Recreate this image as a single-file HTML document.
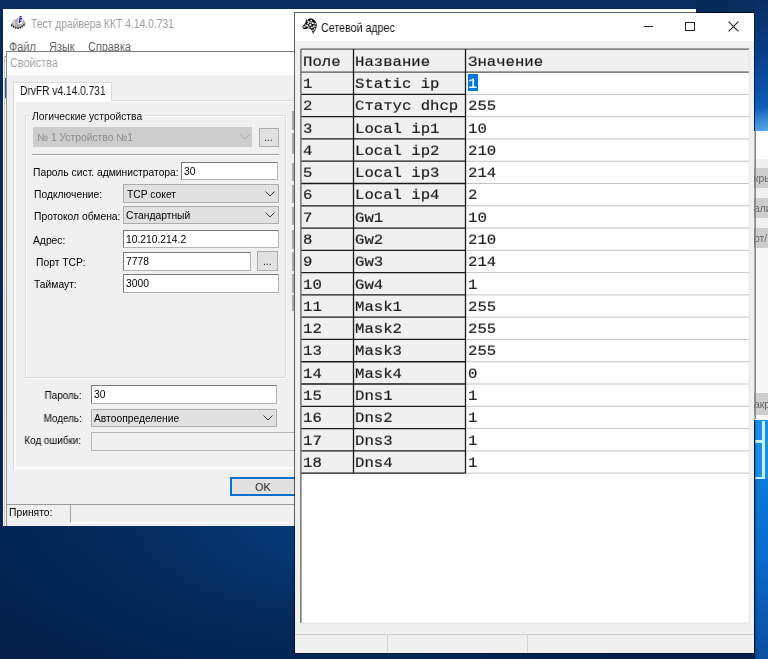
<!DOCTYPE html>
<html><head><meta charset="utf-8">
<style>
*{margin:0;padding:0;box-sizing:border-box}
html,body{width:768px;height:659px;overflow:hidden}
body{position:relative;font-family:"Liberation Sans",sans-serif;
 background:radial-gradient(ellipse 380px 200px at 330px 520px,#063f80 0%,rgba(5,52,108,.6) 45%,rgba(4,36,80,0) 100%),linear-gradient(180deg,#072b5e 0%,#052858 55%,#031f48 100%)}
.a{position:absolute}
.t{position:absolute;white-space:nowrap;line-height:1;transform-origin:left top;-webkit-font-smoothing:antialiased;will-change:transform}
</style></head><body>
<div class="a" style="left:696px;top:0px;width:72px;height:12.3px;background:linear-gradient(90deg,#072856 0%,#0a2e62 100%)"></div>
<div class="a" style="left:754.6px;top:0px;width:13.4px;height:131px;background:linear-gradient(180deg,#0a2e62 0%,#0a3d86 40%,#0c56b0 75%,#1a70c8 100%)"></div>
<div class="a" style="left:754.6px;top:95px;width:13.4px;height:36px;background:linear-gradient(165deg,rgba(90,170,235,0) 35%,rgba(110,185,240,.75) 100%)"></div>
<div class="a" style="left:754.6px;top:419px;width:13.4px;height:60px;background:#1b8fe8"></div>
<div class="a" style="left:754.6px;top:479px;width:13.4px;height:180px;background:linear-gradient(180deg,#0b7ad8 0%,#0a6cd0 40%,#0a4e9e 100%)"></div>
<div class="a" style="left:761.8px;top:421px;width:2.8px;height:58px;background:#c4f3ff"></div>
<div class="a" style="left:755px;top:440px;width:8px;height:2.6px;background:#c4f3ff"></div>
<div class="a" style="left:755px;top:476.6px;width:8px;height:2.6px;background:#c4f3ff"></div>
<div class="a" style="left:754.6px;top:420px;width:2.4px;height:239px;background:linear-gradient(90deg,rgba(0,20,60,.35),rgba(0,20,60,0))"></div>
<div class="a" style="left:754px;top:131px;width:14px;height:288px;background:#fff"></div>
<div class="a" style="left:754px;top:159px;width:14px;height:261px;background:#f0f0f0"></div>
<div class="a" style="left:754px;top:167.5px;width:14px;height:20.9px;background:#cdcdcd"></div>
<div class="t" style="left:753.5px;top:174px;font-size:10.3px;color:#666;font-family:'Liberation Sans',sans-serif;">кры</div>
<div class="a" style="left:754px;top:197.6px;width:14px;height:20px;background:#cdcdcd"></div>
<div class="t" style="left:753.5px;top:204px;font-size:10.3px;color:#666;font-family:'Liberation Sans',sans-serif;">али</div>
<div class="a" style="left:754px;top:227.6px;width:14px;height:20.1px;background:#cdcdcd"></div>
<div class="t" style="left:753.5px;top:234px;font-size:10.3px;color:#666;font-family:'Liberation Sans',sans-serif;">рт/</div>
<div class="a" style="left:754px;top:393px;width:14px;height:22px;background:#cdcdcd"></div>
<div class="t" style="left:753.5px;top:400px;font-size:10.3px;color:#666;font-family:'Liberation Sans',sans-serif;">акр</div>
<div class="a" style="left:754px;top:248px;width:14px;height:145px;background:#f7f7f7"></div>
<div class="a" style="left:754px;top:415px;width:14px;height:4px;background:#f7f7f7"></div>
<div class="a" style="left:754.6px;top:131px;width:1px;height:288px;background:#8a8a8a"></div>
<div class="a" style="left:3px;top:9px;width:693px;height:516.5px;background:#fff"></div>
<svg class="a" style="left:10px;top:13.8px" width="16" height="15" viewBox="0 0 16 15">
<path d="M0.8 10.2 L2.5 8 L3.6 6.6 L5.2 5.6 L7.5 4.2 L10 3.8 L13 5 L15.4 8 L14.6 10.6 L11.4 13 L8 14 L5 13.6 L2.2 12.4 Z" fill="#b4b0b4"/>
<path d="M1.2 11 L3 12.4 L5.4 13.6 L8.2 14.2 L11 13.4 L13.6 11.6 L15.2 9.6" stroke="#141414" stroke-width="1.7" fill="none" stroke-dasharray="1.4 0.9"/>
<path d="M7.6 10 L9.2 2 L11.4 1 L13 3.2 L12.2 10 Z" fill="#f4f4ff"/>
<path d="M9.6 3 L11.6 2.4 M9.2 5.4 L12.2 4.6 M8.8 7.6 L11.6 7 M10.2 2.6 L9.4 9" stroke="#2a2a9c" stroke-width="1.2"/>
<rect x="3.6" y="7.4" width="1.4" height="4.4" fill="#d8d4d8"/>
</svg>
<div class="t" style="left:31px;top:18px;font-size:12px;color:#9c9c9c;font-family:'Liberation Sans',sans-serif;transform:scaleX(0.86);">Тест драйвера ККТ 4.14.0.731</div>
<div class="t" style="left:9.1px;top:41px;font-size:12px;color:#5e5e5e;font-family:'Liberation Sans',sans-serif;transform:scaleX(0.91);">Файл</div>
<div class="t" style="left:48.5px;top:41px;font-size:12px;color:#5e5e5e;font-family:'Liberation Sans',sans-serif;transform:scaleX(0.91);">Язык</div>
<div class="t" style="left:87.5px;top:41px;font-size:12px;color:#5e5e5e;font-family:'Liberation Sans',sans-serif;transform:scaleX(0.91);">Справка</div>
<div class="a" style="left:6px;top:51px;width:294px;height:475px;background:#f0f0f0;border-left:1px solid #8e8e8e;border-top:1px solid #7a7a7a"></div>
<div class="a" style="left:3.6px;top:56px;width:2.4px;height:1px;background:#8a8a8a"></div>
<div class="a" style="left:4px;top:56px;width:1px;height:470px;background:#c4c4c4"></div>
<div class="a" style="left:5px;top:78px;width:1.2px;height:20px;background:#1f5fa8"></div>
<div class="a" style="left:7px;top:52px;width:293px;height:23px;background:#fff"></div>
<div class="t" style="left:9.6px;top:57px;font-size:12px;color:#a3a3a3;font-family:'Liberation Sans',sans-serif;transform:scaleX(0.91);">Свойства</div>
<div class="a" style="left:12.5px;top:100px;width:287.5px;height:368.5px;background:#fff;border-top:1px solid #dadada;border-left:1px solid #dadada"></div>
<div class="a" style="left:16px;top:102px;width:284px;height:365px;background:#f0f0f0"></div>
<div class="a" style="left:12.5px;top:82px;width:99.5px;height:19px;background:#fff;border:1px solid #dadada;border-bottom:none"></div>
<div class="t" style="left:19.6px;top:85px;font-size:12px;color:#111;font-family:'Liberation Sans',sans-serif;transform:scaleX(0.85);">DrvFR v4.14.0.731</div>
<div class="a" style="left:24.5px;top:115px;width:261.5px;height:262.5px;border:1px solid #dcdcdc;box-shadow:inset 1px 1px 0 #fff,1px 1px 0 #fff"></div>
<div class="a" style="left:30px;top:110px;width:115px;height:11px;background:#f0f0f0"></div>
<div class="t" style="left:31.8px;top:112px;font-size:10.3px;color:#111;font-family:'Liberation Sans',sans-serif;">Логические устройства</div>
<div class="a" style="left:32.8px;top:127.2px;width:218.8px;height:19.4px;background:#cccccc"></div>
<div class="t" style="left:36.8px;top:133px;font-size:10.3px;color:#8c8c8c;font-family:'Liberation Sans',sans-serif;">№ 1 Устройство №1</div>
<svg class="a" style="left:240px;top:134px" width="10" height="6" viewBox="0 0 10 6"><path d="M0.5 0.5 L5 5 L9.5 0.5" stroke="#a9a9a9" stroke-width="1" fill="none"/></svg>
<div class="a" style="left:259px;top:127.5px;width:19.5px;height:19.1px;background:#e1e1e1;border:1px solid #adadad"></div>
<div class="t" style="left:264px;top:133px;font-size:10.3px;color:#222;font-family:'Liberation Sans',sans-serif;">...</div>
<div class="a" style="left:32px;top:153.6px;width:247px;height:1px;background:#a0a0a0"></div>
<div class="a" style="left:32px;top:154.6px;width:247px;height:1px;background:#fff"></div>
<div class="t" style="left:33.4px;top:168px;font-size:10.3px;color:#000;font-family:'Liberation Sans',sans-serif;">Пароль сист. администратора:</div>
<div class="a" style="left:181.2px;top:162.3px;width:97.2px;height:18.2px;background:#fff;border:1px solid #7a7a7a;border-right-color:#b4b4b4;border-bottom-color:#b4b4b4"></div>
<div class="t" style="left:184px;top:167px;font-size:10.3px;color:#000;font-family:'Liberation Sans',sans-serif;">30</div>
<div class="t" style="left:33.7px;top:190px;font-size:10.3px;color:#000;font-family:'Liberation Sans',sans-serif;">Подключение:</div>
<div class="a" style="left:122.7px;top:184.4px;width:155.9px;height:18.3px;background:#e1e1e1;border:1px solid #adadad"></div>
<svg class="a" style="left:264.6px;top:190.55px" width="10" height="6" viewBox="0 0 10 6"><path d="M0.5 0.5 L5 5 L9.5 0.5" stroke="#3a3a3a" stroke-width="1" fill="none"/></svg>
<div class="t" style="left:127px;top:190px;font-size:10.3px;color:#000;font-family:'Liberation Sans',sans-serif;">TCP сокет</div>
<div class="t" style="left:33.7px;top:212px;font-size:10.3px;color:#000;font-family:'Liberation Sans',sans-serif;">Протокол обмена:</div>
<div class="a" style="left:122.7px;top:205.8px;width:155.9px;height:18.7px;background:#e1e1e1;border:1px solid #adadad"></div>
<svg class="a" style="left:264.6px;top:212.15px" width="10" height="6" viewBox="0 0 10 6"><path d="M0.5 0.5 L5 5 L9.5 0.5" stroke="#3a3a3a" stroke-width="1" fill="none"/></svg>
<div class="t" style="left:126px;top:211px;font-size:10.3px;color:#000;font-family:'Liberation Sans',sans-serif;">Стандартный</div>
<div class="t" style="left:33px;top:236px;font-size:10.3px;color:#000;font-family:'Liberation Sans',sans-serif;">Адрес:</div>
<div class="a" style="left:122.7px;top:229.7px;width:155.9px;height:18.5px;background:#fff;border:1px solid #7a7a7a;border-right-color:#b4b4b4;border-bottom-color:#b4b4b4"></div>
<div class="t" style="left:125.5px;top:235px;font-size:10.3px;color:#000;font-family:'Liberation Sans',sans-serif;">10.210.214.2</div>
<div class="t" style="left:35.6px;top:258px;font-size:10.3px;color:#000;font-family:'Liberation Sans',sans-serif;">Порт TCP:</div>
<div class="a" style="left:122.7px;top:251.9px;width:128.3px;height:19px;background:#fff;border:1px solid #7a7a7a;border-right-color:#b4b4b4;border-bottom-color:#b4b4b4"></div>
<div class="t" style="left:125.5px;top:257px;font-size:10.3px;color:#000;font-family:'Liberation Sans',sans-serif;">7778</div>
<div class="a" style="left:257.3px;top:251.4px;width:20.8px;height:19.5px;background:#e1e1e1;border:1px solid #adadad"></div>
<div class="t" style="left:262.5px;top:257px;font-size:10.3px;color:#222;font-family:'Liberation Sans',sans-serif;">...</div>
<div class="t" style="left:34px;top:280px;font-size:10.3px;color:#000;font-family:'Liberation Sans',sans-serif;">Таймаут:</div>
<div class="a" style="left:122.7px;top:274px;width:155.9px;height:19px;background:#fff;border:1px solid #7a7a7a;border-right-color:#b4b4b4;border-bottom-color:#b4b4b4"></div>
<div class="t" style="left:125.5px;top:279px;font-size:10.3px;color:#000;font-family:'Liberation Sans',sans-serif;">3000</div>
<div class="t" style="right:686.5px;top:391px;font-size:10.3px;color:#000;transform:scaleX(0.96);transform-origin:right top;">Пароль:</div>
<div class="a" style="left:90.8px;top:385.3px;width:186.2px;height:18.6px;background:#fff;border:1px solid #7a7a7a;border-right-color:#b4b4b4;border-bottom-color:#b4b4b4"></div>
<div class="t" style="left:93.5px;top:390px;font-size:10.3px;color:#000;font-family:'Liberation Sans',sans-serif;">30</div>
<div class="t" style="right:686.5px;top:414px;font-size:10.3px;color:#000;transform:scaleX(0.96);transform-origin:right top;">Модель:</div>
<div class="a" style="left:90.8px;top:408.6px;width:186.2px;height:18.6px;background:#e1e1e1;border:1px solid #adadad"></div>
<svg class="a" style="left:263px;top:414.9px" width="10" height="6" viewBox="0 0 10 6"><path d="M0.5 0.5 L5 5 L9.5 0.5" stroke="#3a3a3a" stroke-width="1" fill="none"/></svg>
<div class="t" style="left:94px;top:414px;font-size:10.3px;color:#000;font-family:'Liberation Sans',sans-serif;">Автоопределение</div>
<div class="t" style="right:686.5px;top:436px;font-size:10.3px;color:#000;transform:scaleX(0.96);transform-origin:right top;">Код ошибки:</div>
<div class="a" style="left:90.8px;top:431.5px;width:209.2px;height:19.2px;background:#f0f0f0;border:1px solid #b4b4b4"></div>
<div class="a" style="left:230.3px;top:477.2px;width:69.7px;height:18.6px;background:#e1e1e1;border:2px solid #0a70d0"></div>
<div class="t" style="left:255.4px;top:481px;font-size:11.76px;color:#222;font-family:'Liberation Sans',sans-serif;transform:scaleX(0.92);">OK</div>
<div class="a" style="left:7px;top:503.6px;width:293px;height:1px;background:#9a9a9a"></div>
<div class="t" style="left:9.1px;top:508px;font-size:10.3px;color:#000;font-family:'Liberation Sans',sans-serif;">Принято:</div>
<div class="a" style="left:70.3px;top:504.6px;width:229.7px;height:18.1px;border-left:1px solid #a0a0a0;border-bottom:1px solid #fff"></div>
<div class="a" style="left:292.4px;top:111px;width:1.2px;height:19px;background:#a9a9a9"></div>
<div class="a" style="left:292.4px;top:133px;width:1.2px;height:21px;background:#a9a9a9"></div>
<div class="a" style="left:292.4px;top:163px;width:1.2px;height:18px;background:#a9a9a9"></div>
<div class="a" style="left:292.4px;top:185px;width:1.2px;height:18px;background:#a9a9a9"></div>
<div class="a" style="left:292.4px;top:207px;width:1.2px;height:18px;background:#a9a9a9"></div>
<div class="a" style="left:292.4px;top:230px;width:1.2px;height:19px;background:#a9a9a9"></div>
<div class="a" style="left:292.4px;top:252px;width:1.2px;height:19px;background:#a9a9a9"></div>
<div class="a" style="left:292.4px;top:274px;width:1.2px;height:19px;background:#a9a9a9"></div>
<div class="a" style="left:292.4px;top:295px;width:1.2px;height:16px;background:#a9a9a9"></div>
<div class="a" style="left:294px;top:12.3px;width:460.6px;height:641.7px;background:#f0f0f0;background-clip:padding-box;border-left:1px solid rgba(0,0,0,.62);border-top:1px solid rgba(0,0,0,.62);border-right:1px solid rgba(0,0,0,.3);border-bottom:1px solid rgba(0,0,0,.35)"></div>
<div class="a" style="left:295px;top:13.3px;width:458.6px;height:27.9px;background:#fff"></div>
<svg class="a" style="left:302px;top:17.5px" width="16" height="16" viewBox="0 0 16 16">
<path d="M0.3 8.6 L2 6.8 L3.3 5 L3.8 2.8 L4.3 0.8 L5.2 2.2 L7 0.4 L10 0.5 L12 1.8 L13.6 3.6 L14.6 5.8 L14.9 8.6 L14 11 L12.6 13 L11 15.8 L10.1 13.2 L9.2 11.4 L7.2 10.2 L5 10.6 L3 11.2 L1 10.4 Z" fill="#0a0a0a"/>
<g fill="#fff">
<rect x="1.4" y="8.2" width="2" height="1.4"/><rect x="4.4" y="7" width="1.8" height="1.8"/><rect x="6" y="3.2" width="1.6" height="1.9"/>
<rect x="8.4" y="1.9" width="1.7" height="1.6"/><rect x="7.4" y="6" width="1.9" height="1.8"/><rect x="10" y="4.3" width="1.8" height="1.7"/>
<rect x="11" y="7.4" width="1.7" height="1.8"/><rect x="8.9" y="8.6" width="1.8" height="1.6"/><rect x="12.5" y="5" width="1.3" height="1.5"/>
<rect x="11.8" y="10" width="1.5" height="1.6"/><rect x="5.2" y="5" width="1.4" height="1.3"/><rect x="10.4" y="11.6" width="1.3" height="1.5"/>
<rect x="2.9" y="6.4" width="1.4" height="1.3"/><rect x="8.2" y="4.2" width="1.3" height="1.3"/><rect x="6.2" y="8.6" width="1.4" height="1.2"/>
<rect x="4.8" y="1.6" width="0.8" height="2.2"/><rect x="13.4" y="7.8" width="1" height="1.6"/>
</g></svg>
<div class="t" style="left:321.4px;top:22px;font-size:12px;color:#111;font-family:'Liberation Sans',sans-serif;transform:scaleX(0.89);">Сетевой адрес</div>
<div class="a" style="left:644px;top:26px;width:8.6px;height:1px;background:#222"></div>
<div class="a" style="left:685px;top:21.5px;width:10px;height:9.5px;border:1px solid #222"></div>
<svg class="a" style="left:727.5px;top:20.5px" width="11" height="11" viewBox="0 0 11 11"><path d="M0.6 0.6 L10.4 10.4 M10.4 0.6 L0.6 10.4" stroke="#222" stroke-width="1.1"/></svg>
<div class="a" style="left:300.5px;top:48.6px;width:449px;height:574.7px;background:#fff"></div>
<div class="a" style="left:295px;top:634px;width:458.6px;height:1px;background:#cfcfcf"></div>
<div class="a" style="left:387px;top:635px;width:1px;height:17px;background:#d4d4d4"></div>
<div class="a" style="left:527px;top:635px;width:1px;height:17px;background:#d4d4d4"></div>
<svg class="a" style="left:0;top:0" width="768" height="659"><rect x="300.9" y="49.1" width="448.3" height="23" fill="#f0f0f0"/><rect x="300.9" y="72.1" width="164.6" height="401.04" fill="#f0f0f0"/><line x1="465.5" y1="94.38" x2="749.2" y2="94.38" stroke="#c4c4c4" stroke-width="1"/><line x1="465.5" y1="116.66" x2="749.2" y2="116.66" stroke="#c4c4c4" stroke-width="1"/><line x1="465.5" y1="138.94" x2="749.2" y2="138.94" stroke="#c4c4c4" stroke-width="1"/><line x1="465.5" y1="161.22" x2="749.2" y2="161.22" stroke="#c4c4c4" stroke-width="1"/><line x1="465.5" y1="183.5" x2="749.2" y2="183.5" stroke="#c4c4c4" stroke-width="1"/><line x1="465.5" y1="205.78" x2="749.2" y2="205.78" stroke="#c4c4c4" stroke-width="1"/><line x1="465.5" y1="228.06" x2="749.2" y2="228.06" stroke="#c4c4c4" stroke-width="1"/><line x1="465.5" y1="250.34" x2="749.2" y2="250.34" stroke="#c4c4c4" stroke-width="1"/><line x1="465.5" y1="272.62" x2="749.2" y2="272.62" stroke="#c4c4c4" stroke-width="1"/><line x1="465.5" y1="294.9" x2="749.2" y2="294.9" stroke="#c4c4c4" stroke-width="1"/><line x1="465.5" y1="317.18" x2="749.2" y2="317.18" stroke="#c4c4c4" stroke-width="1"/><line x1="465.5" y1="339.46" x2="749.2" y2="339.46" stroke="#c4c4c4" stroke-width="1"/><line x1="465.5" y1="361.74" x2="749.2" y2="361.74" stroke="#c4c4c4" stroke-width="1"/><line x1="465.5" y1="384.02" x2="749.2" y2="384.02" stroke="#c4c4c4" stroke-width="1"/><line x1="465.5" y1="406.3" x2="749.2" y2="406.3" stroke="#c4c4c4" stroke-width="1"/><line x1="465.5" y1="428.58" x2="749.2" y2="428.58" stroke="#c4c4c4" stroke-width="1"/><line x1="465.5" y1="450.86" x2="749.2" y2="450.86" stroke="#c4c4c4" stroke-width="1"/><line x1="465.5" y1="473.14" x2="749.2" y2="473.14" stroke="#c4c4c4" stroke-width="1"/><line x1="300.9" y1="72.1" x2="749.2" y2="72.1" stroke="#555" stroke-width="1.3"/><line x1="300.9" y1="94.38" x2="465.5" y2="94.38" stroke="#1a1a1a" stroke-width="1.3"/><line x1="300.9" y1="116.66" x2="465.5" y2="116.66" stroke="#1a1a1a" stroke-width="1.3"/><line x1="300.9" y1="138.94" x2="465.5" y2="138.94" stroke="#1a1a1a" stroke-width="1.3"/><line x1="300.9" y1="161.22" x2="465.5" y2="161.22" stroke="#1a1a1a" stroke-width="1.3"/><line x1="300.9" y1="183.5" x2="465.5" y2="183.5" stroke="#1a1a1a" stroke-width="1.3"/><line x1="300.9" y1="205.78" x2="465.5" y2="205.78" stroke="#1a1a1a" stroke-width="1.3"/><line x1="300.9" y1="228.06" x2="465.5" y2="228.06" stroke="#1a1a1a" stroke-width="1.3"/><line x1="300.9" y1="250.34" x2="465.5" y2="250.34" stroke="#1a1a1a" stroke-width="1.3"/><line x1="300.9" y1="272.62" x2="465.5" y2="272.62" stroke="#1a1a1a" stroke-width="1.3"/><line x1="300.9" y1="294.9" x2="465.5" y2="294.9" stroke="#1a1a1a" stroke-width="1.3"/><line x1="300.9" y1="317.18" x2="465.5" y2="317.18" stroke="#1a1a1a" stroke-width="1.3"/><line x1="300.9" y1="339.46" x2="465.5" y2="339.46" stroke="#1a1a1a" stroke-width="1.3"/><line x1="300.9" y1="361.74" x2="465.5" y2="361.74" stroke="#1a1a1a" stroke-width="1.3"/><line x1="300.9" y1="384.02" x2="465.5" y2="384.02" stroke="#1a1a1a" stroke-width="1.3"/><line x1="300.9" y1="406.3" x2="465.5" y2="406.3" stroke="#1a1a1a" stroke-width="1.3"/><line x1="300.9" y1="428.58" x2="465.5" y2="428.58" stroke="#1a1a1a" stroke-width="1.3"/><line x1="300.9" y1="450.86" x2="465.5" y2="450.86" stroke="#1a1a1a" stroke-width="1.3"/><line x1="300.9" y1="473.14" x2="465.5" y2="473.14" stroke="#1a1a1a" stroke-width="1.3"/><line x1="300.9" y1="49.1" x2="749.2" y2="49.1" stroke="#5a5a5a" stroke-width="1.4"/><line x1="300.9" y1="49.1" x2="300.9" y2="623" stroke="#6a6a6a" stroke-width="1.4"/><line x1="353.5" y1="49.1" x2="353.5" y2="473.14" stroke="#1a1a1a" stroke-width="1.3"/><line x1="465.5" y1="49.1" x2="465.5" y2="473.14" stroke="#1a1a1a" stroke-width="1.3"/><line x1="749.2" y1="49.1" x2="749.2" y2="623" stroke="#e0e0e0" stroke-width="1"/><line x1="300.9" y1="623" x2="749.2" y2="623" stroke="#e0e0e0" stroke-width="1"/></svg>
<div class="t" style="left:303.4px;top:55px;font-size:15.65px;color:#1a1a1a;font-family:'Liberation Mono',monospace;transform:scaleY(0.86);transform-origin:0 11px;-webkit-text-stroke:0.2px currentColor;">Поле</div>
<div class="t" style="left:355px;top:55px;font-size:15.65px;color:#1a1a1a;font-family:'Liberation Mono',monospace;transform:scaleY(0.86);transform-origin:0 11px;-webkit-text-stroke:0.2px currentColor;">Название</div>
<div class="t" style="left:467.8px;top:55px;font-size:15.65px;color:#1a1a1a;font-family:'Liberation Mono',monospace;transform:scaleY(0.86);transform-origin:0 11px;-webkit-text-stroke:0.2px currentColor;">Значение</div>
<div class="t" style="left:303.4px;top:77px;font-size:15.65px;color:#1a1a1a;font-family:'Liberation Mono',monospace;transform:scaleY(0.86);transform-origin:0 11px;-webkit-text-stroke:0.2px currentColor;">1</div>
<div class="t" style="left:355px;top:77px;font-size:15.65px;color:#1a1a1a;font-family:'Liberation Mono',monospace;transform:scaleY(0.86);transform-origin:0 11px;-webkit-text-stroke:0.2px currentColor;">Static ip</div>
<div class="a" style="left:468px;top:74.4px;width:9.6px;height:16.4px;background:#0078d7"></div>
<div class="t" style="left:467.8px;top:77px;font-size:15.65px;color:#fff;font-family:'Liberation Mono',monospace;transform:scaleY(0.86);transform-origin:0 11px;-webkit-text-stroke:0.2px currentColor;">1</div>
<div class="t" style="left:303.4px;top:99px;font-size:15.65px;color:#1a1a1a;font-family:'Liberation Mono',monospace;transform:scaleY(0.86);transform-origin:0 11px;-webkit-text-stroke:0.2px currentColor;">2</div>
<div class="t" style="left:355px;top:99px;font-size:15.65px;color:#1a1a1a;font-family:'Liberation Mono',monospace;transform:scaleY(0.86);transform-origin:0 11px;-webkit-text-stroke:0.2px currentColor;">Статус dhcp</div>
<div class="t" style="left:467.8px;top:99px;font-size:15.65px;color:#1a1a1a;font-family:'Liberation Mono',monospace;transform:scaleY(0.86);transform-origin:0 11px;-webkit-text-stroke:0.2px currentColor;">255</div>
<div class="t" style="left:303.4px;top:122px;font-size:15.65px;color:#1a1a1a;font-family:'Liberation Mono',monospace;transform:scaleY(0.86);transform-origin:0 11px;-webkit-text-stroke:0.2px currentColor;">3</div>
<div class="t" style="left:355px;top:122px;font-size:15.65px;color:#1a1a1a;font-family:'Liberation Mono',monospace;transform:scaleY(0.86);transform-origin:0 11px;-webkit-text-stroke:0.2px currentColor;">Local ip1</div>
<div class="t" style="left:467.8px;top:122px;font-size:15.65px;color:#1a1a1a;font-family:'Liberation Mono',monospace;transform:scaleY(0.86);transform-origin:0 11px;-webkit-text-stroke:0.2px currentColor;">10</div>
<div class="t" style="left:303.4px;top:144px;font-size:15.65px;color:#1a1a1a;font-family:'Liberation Mono',monospace;transform:scaleY(0.86);transform-origin:0 11px;-webkit-text-stroke:0.2px currentColor;">4</div>
<div class="t" style="left:355px;top:144px;font-size:15.65px;color:#1a1a1a;font-family:'Liberation Mono',monospace;transform:scaleY(0.86);transform-origin:0 11px;-webkit-text-stroke:0.2px currentColor;">Local ip2</div>
<div class="t" style="left:467.8px;top:144px;font-size:15.65px;color:#1a1a1a;font-family:'Liberation Mono',monospace;transform:scaleY(0.86);transform-origin:0 11px;-webkit-text-stroke:0.2px currentColor;">210</div>
<div class="t" style="left:303.4px;top:166px;font-size:15.65px;color:#1a1a1a;font-family:'Liberation Mono',monospace;transform:scaleY(0.86);transform-origin:0 11px;-webkit-text-stroke:0.2px currentColor;">5</div>
<div class="t" style="left:355px;top:166px;font-size:15.65px;color:#1a1a1a;font-family:'Liberation Mono',monospace;transform:scaleY(0.86);transform-origin:0 11px;-webkit-text-stroke:0.2px currentColor;">Local ip3</div>
<div class="t" style="left:467.8px;top:166px;font-size:15.65px;color:#1a1a1a;font-family:'Liberation Mono',monospace;transform:scaleY(0.86);transform-origin:0 11px;-webkit-text-stroke:0.2px currentColor;">214</div>
<div class="t" style="left:303.4px;top:188px;font-size:15.65px;color:#1a1a1a;font-family:'Liberation Mono',monospace;transform:scaleY(0.86);transform-origin:0 11px;-webkit-text-stroke:0.2px currentColor;">6</div>
<div class="t" style="left:355px;top:188px;font-size:15.65px;color:#1a1a1a;font-family:'Liberation Mono',monospace;transform:scaleY(0.86);transform-origin:0 11px;-webkit-text-stroke:0.2px currentColor;">Local ip4</div>
<div class="t" style="left:467.8px;top:188px;font-size:15.65px;color:#1a1a1a;font-family:'Liberation Mono',monospace;transform:scaleY(0.86);transform-origin:0 11px;-webkit-text-stroke:0.2px currentColor;">2</div>
<div class="t" style="left:303.4px;top:211px;font-size:15.65px;color:#1a1a1a;font-family:'Liberation Mono',monospace;transform:scaleY(0.86);transform-origin:0 11px;-webkit-text-stroke:0.2px currentColor;">7</div>
<div class="t" style="left:355px;top:211px;font-size:15.65px;color:#1a1a1a;font-family:'Liberation Mono',monospace;transform:scaleY(0.86);transform-origin:0 11px;-webkit-text-stroke:0.2px currentColor;">Gw1</div>
<div class="t" style="left:467.8px;top:211px;font-size:15.65px;color:#1a1a1a;font-family:'Liberation Mono',monospace;transform:scaleY(0.86);transform-origin:0 11px;-webkit-text-stroke:0.2px currentColor;">10</div>
<div class="t" style="left:303.4px;top:233px;font-size:15.65px;color:#1a1a1a;font-family:'Liberation Mono',monospace;transform:scaleY(0.86);transform-origin:0 11px;-webkit-text-stroke:0.2px currentColor;">8</div>
<div class="t" style="left:355px;top:233px;font-size:15.65px;color:#1a1a1a;font-family:'Liberation Mono',monospace;transform:scaleY(0.86);transform-origin:0 11px;-webkit-text-stroke:0.2px currentColor;">Gw2</div>
<div class="t" style="left:467.8px;top:233px;font-size:15.65px;color:#1a1a1a;font-family:'Liberation Mono',monospace;transform:scaleY(0.86);transform-origin:0 11px;-webkit-text-stroke:0.2px currentColor;">210</div>
<div class="t" style="left:303.4px;top:255px;font-size:15.65px;color:#1a1a1a;font-family:'Liberation Mono',monospace;transform:scaleY(0.86);transform-origin:0 11px;-webkit-text-stroke:0.2px currentColor;">9</div>
<div class="t" style="left:355px;top:255px;font-size:15.65px;color:#1a1a1a;font-family:'Liberation Mono',monospace;transform:scaleY(0.86);transform-origin:0 11px;-webkit-text-stroke:0.2px currentColor;">Gw3</div>
<div class="t" style="left:467.8px;top:255px;font-size:15.65px;color:#1a1a1a;font-family:'Liberation Mono',monospace;transform:scaleY(0.86);transform-origin:0 11px;-webkit-text-stroke:0.2px currentColor;">214</div>
<div class="t" style="left:303.4px;top:278px;font-size:15.65px;color:#1a1a1a;font-family:'Liberation Mono',monospace;transform:scaleY(0.86);transform-origin:0 11px;-webkit-text-stroke:0.2px currentColor;">10</div>
<div class="t" style="left:355px;top:278px;font-size:15.65px;color:#1a1a1a;font-family:'Liberation Mono',monospace;transform:scaleY(0.86);transform-origin:0 11px;-webkit-text-stroke:0.2px currentColor;">Gw4</div>
<div class="t" style="left:467.8px;top:278px;font-size:15.65px;color:#1a1a1a;font-family:'Liberation Mono',monospace;transform:scaleY(0.86);transform-origin:0 11px;-webkit-text-stroke:0.2px currentColor;">1</div>
<div class="t" style="left:303.4px;top:300px;font-size:15.65px;color:#1a1a1a;font-family:'Liberation Mono',monospace;transform:scaleY(0.86);transform-origin:0 11px;-webkit-text-stroke:0.2px currentColor;">11</div>
<div class="t" style="left:355px;top:300px;font-size:15.65px;color:#1a1a1a;font-family:'Liberation Mono',monospace;transform:scaleY(0.86);transform-origin:0 11px;-webkit-text-stroke:0.2px currentColor;">Mask1</div>
<div class="t" style="left:467.8px;top:300px;font-size:15.65px;color:#1a1a1a;font-family:'Liberation Mono',monospace;transform:scaleY(0.86);transform-origin:0 11px;-webkit-text-stroke:0.2px currentColor;">255</div>
<div class="t" style="left:303.4px;top:322px;font-size:15.65px;color:#1a1a1a;font-family:'Liberation Mono',monospace;transform:scaleY(0.86);transform-origin:0 11px;-webkit-text-stroke:0.2px currentColor;">12</div>
<div class="t" style="left:355px;top:322px;font-size:15.65px;color:#1a1a1a;font-family:'Liberation Mono',monospace;transform:scaleY(0.86);transform-origin:0 11px;-webkit-text-stroke:0.2px currentColor;">Mask2</div>
<div class="t" style="left:467.8px;top:322px;font-size:15.65px;color:#1a1a1a;font-family:'Liberation Mono',monospace;transform:scaleY(0.86);transform-origin:0 11px;-webkit-text-stroke:0.2px currentColor;">255</div>
<div class="t" style="left:303.4px;top:344px;font-size:15.65px;color:#1a1a1a;font-family:'Liberation Mono',monospace;transform:scaleY(0.86);transform-origin:0 11px;-webkit-text-stroke:0.2px currentColor;">13</div>
<div class="t" style="left:355px;top:344px;font-size:15.65px;color:#1a1a1a;font-family:'Liberation Mono',monospace;transform:scaleY(0.86);transform-origin:0 11px;-webkit-text-stroke:0.2px currentColor;">Mask3</div>
<div class="t" style="left:467.8px;top:344px;font-size:15.65px;color:#1a1a1a;font-family:'Liberation Mono',monospace;transform:scaleY(0.86);transform-origin:0 11px;-webkit-text-stroke:0.2px currentColor;">255</div>
<div class="t" style="left:303.4px;top:367px;font-size:15.65px;color:#1a1a1a;font-family:'Liberation Mono',monospace;transform:scaleY(0.86);transform-origin:0 11px;-webkit-text-stroke:0.2px currentColor;">14</div>
<div class="t" style="left:355px;top:367px;font-size:15.65px;color:#1a1a1a;font-family:'Liberation Mono',monospace;transform:scaleY(0.86);transform-origin:0 11px;-webkit-text-stroke:0.2px currentColor;">Mask4</div>
<div class="t" style="left:467.8px;top:367px;font-size:15.65px;color:#1a1a1a;font-family:'Liberation Mono',monospace;transform:scaleY(0.86);transform-origin:0 11px;-webkit-text-stroke:0.2px currentColor;">0</div>
<div class="t" style="left:303.4px;top:389px;font-size:15.65px;color:#1a1a1a;font-family:'Liberation Mono',monospace;transform:scaleY(0.86);transform-origin:0 11px;-webkit-text-stroke:0.2px currentColor;">15</div>
<div class="t" style="left:355px;top:389px;font-size:15.65px;color:#1a1a1a;font-family:'Liberation Mono',monospace;transform:scaleY(0.86);transform-origin:0 11px;-webkit-text-stroke:0.2px currentColor;">Dns1</div>
<div class="t" style="left:467.8px;top:389px;font-size:15.65px;color:#1a1a1a;font-family:'Liberation Mono',monospace;transform:scaleY(0.86);transform-origin:0 11px;-webkit-text-stroke:0.2px currentColor;">1</div>
<div class="t" style="left:303.4px;top:411px;font-size:15.65px;color:#1a1a1a;font-family:'Liberation Mono',monospace;transform:scaleY(0.86);transform-origin:0 11px;-webkit-text-stroke:0.2px currentColor;">16</div>
<div class="t" style="left:355px;top:411px;font-size:15.65px;color:#1a1a1a;font-family:'Liberation Mono',monospace;transform:scaleY(0.86);transform-origin:0 11px;-webkit-text-stroke:0.2px currentColor;">Dns2</div>
<div class="t" style="left:467.8px;top:411px;font-size:15.65px;color:#1a1a1a;font-family:'Liberation Mono',monospace;transform:scaleY(0.86);transform-origin:0 11px;-webkit-text-stroke:0.2px currentColor;">1</div>
<div class="t" style="left:303.4px;top:434px;font-size:15.65px;color:#1a1a1a;font-family:'Liberation Mono',monospace;transform:scaleY(0.86);transform-origin:0 11px;-webkit-text-stroke:0.2px currentColor;">17</div>
<div class="t" style="left:355px;top:434px;font-size:15.65px;color:#1a1a1a;font-family:'Liberation Mono',monospace;transform:scaleY(0.86);transform-origin:0 11px;-webkit-text-stroke:0.2px currentColor;">Dns3</div>
<div class="t" style="left:467.8px;top:434px;font-size:15.65px;color:#1a1a1a;font-family:'Liberation Mono',monospace;transform:scaleY(0.86);transform-origin:0 11px;-webkit-text-stroke:0.2px currentColor;">1</div>
<div class="t" style="left:303.4px;top:456px;font-size:15.65px;color:#1a1a1a;font-family:'Liberation Mono',monospace;transform:scaleY(0.86);transform-origin:0 11px;-webkit-text-stroke:0.2px currentColor;">18</div>
<div class="t" style="left:355px;top:456px;font-size:15.65px;color:#1a1a1a;font-family:'Liberation Mono',monospace;transform:scaleY(0.86);transform-origin:0 11px;-webkit-text-stroke:0.2px currentColor;">Dns4</div>
<div class="t" style="left:467.8px;top:456px;font-size:15.65px;color:#1a1a1a;font-family:'Liberation Mono',monospace;transform:scaleY(0.86);transform-origin:0 11px;-webkit-text-stroke:0.2px currentColor;">1</div>
</body></html>
